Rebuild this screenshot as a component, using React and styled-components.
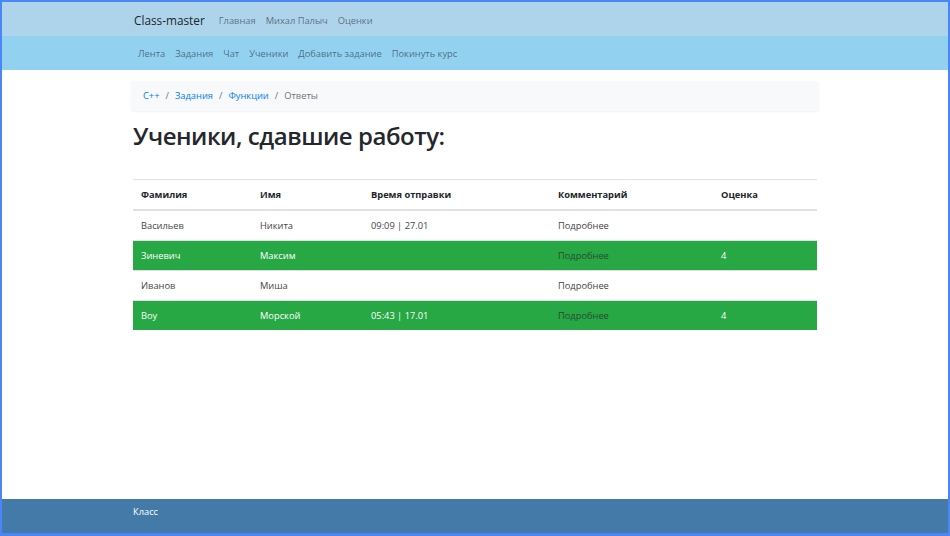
import React from "react";
import styled, { createGlobalStyle } from "styled-components";

const Global = createGlobalStyle`
  html, body { margin: 0; padding: 0; }
  body { font-family: "Open Sans", "Noto Sans", sans-serif; color: #212529; }
  * { box-sizing: border-box; }
`;

const Frame = styled.div`
  height: 536px;
  border: 2px solid #4a86f7;
  border-bottom-width: 3px;
  display: flex;
  flex-direction: column;
  background: #fff;
`;

const Bar = styled.div`
  background: ${(p) => p.$bg};
  height: 34px;
  display: flex;
  justify-content: center;
`;

const Container = styled.div`
  width: 684px;
  display: flex;
  align-items: ${(p) => (p.$top ? "flex-start" : "center")};
  padding-top: ${(p) => p.$pt || 0}px;
`;

const Brand = styled.span`
  font-size: 11.8px;
  color: #212529;
  margin-right: 9px;
  margin-left: 1px;
`;

const NavLink = styled.a`
  font-size: 9.3px;
  color: rgba(0, 0, 0, 0.5);
  padding: 0 5px;
  text-decoration: none;
  white-space: nowrap;
`;

const Main = styled.main`
  flex: 1;
  display: flex;
  justify-content: center;
  padding-top: 11px;
`;

const Content = styled.div`
  width: 684px;
  display: flex;
  flex-direction: column;
`;

const Breadcrumb = styled.nav`
  background: #f8f9fa;
  border-radius: 3px;
  box-shadow: 0 1px 2px rgba(0, 0, 0, 0.06);
  padding: 7px 12px;
  margin: 0 -2px;
  font-size: 9.3px;
  line-height: 16px;
  display: flex;
  gap: 6px;
`;

const Crumb = styled.span`
  color: ${(p) => (p.$active ? "#6c757d" : "#007bff")};
`;

const Sep = styled.span`
  color: #6c757d;
`;

const Title = styled.h1`
  font-size: 24px;
  font-weight: 600;
  margin: 10px 0 28px;
  line-height: 30px;
  color: #24282c;
  letter-spacing: -0.45px;
`;

const Table = styled.table`
  width: 100%;
  border-collapse: collapse;
  font-size: 9.3px;
`;

const Th = styled.th`
  text-align: left;
  font-weight: 700;
  padding: 7px 8px;
  line-height: 15px;
  border-top: 1px solid #dee2e6;
  border-bottom: 2px solid #dee2e6;
  color: #212529;
  width: ${(p) => p.$w}px;
`;

const Tr = styled.tr`
  background: ${(p) => (p.$ok ? "#28a745" : "transparent")};
  color: ${(p) => (p.$ok ? "#fff" : "#444")};
`;

const Td = styled.td`
  padding: 7px 8px;
  line-height: 15px;
  border-top: 1px solid #dee2e6;
`;

const More = styled.span`
  color: ${(p) => (p.$ok ? "#2b4a33" : "#444")};
`;

const Footer = styled.footer`
  background: #437aa7;
  height: 34px;
  display: flex;
  justify-content: center;
`;

const FootText = styled.span`
  color: #fff;
  font-size: 9.3px;
  line-height: 14px;
`;

const rows = [
  { last: "Васильев", first: "Никита", time: "09:09 | 27.01", grade: "", ok: false },
  { last: "Зиневич", first: "Максим", time: "", grade: "4", ok: true },
  { last: "Иванов", first: "Миша", time: "", grade: "", ok: false },
  { last: "Boy", first: "Морской", time: "05:43 | 17.01", grade: "4", ok: true },
];

export default function App() {
  return (
    <>
      <Global />
      <Frame>
        <Bar $bg="#aed4ec">
          <Container $pt={2}>
            <Brand>Class-master</Brand>
            <NavLink>Главная</NavLink>
            <NavLink>Михал Палыч</NavLink>
            <NavLink>Оценки</NavLink>
          </Container>
        </Bar>
        <Bar $bg="#93d1f1">
          <Container>
            <NavLink>Лента</NavLink>
            <NavLink>Задания</NavLink>
            <NavLink>Чат</NavLink>
            <NavLink>Ученики</NavLink>
            <NavLink>Добавить задание</NavLink>
            <NavLink>Покинуть курс</NavLink>
          </Container>
        </Bar>
        <Main>
          <Content>
            <Breadcrumb>
              <Crumb>C++</Crumb>
              <Sep>/</Sep>
              <Crumb>Задания</Crumb>
              <Sep>/</Sep>
              <Crumb>Функции</Crumb>
              <Sep>/</Sep>
              <Crumb $active>Ответы</Crumb>
            </Breadcrumb>
            <Title>Ученики, сдавшие работу:</Title>
            <Table>
              <thead>
                <tr>
                  <Th $w={119}>Фамилия</Th>
                  <Th $w={111}>Имя</Th>
                  <Th $w={187}>Время отправки</Th>
                  <Th $w={163}>Комментарий</Th>
                  <Th>Оценка</Th>
                </tr>
              </thead>
              <tbody>
                {rows.map((r) => (
                  <Tr key={r.last} $ok={r.ok}>
                    <Td>{r.last}</Td>
                    <Td>{r.first}</Td>
                    <Td>{r.time}</Td>
                    <Td>
                      <More $ok={r.ok}>Подробнее</More>
                    </Td>
                    <Td>{r.grade}</Td>
                  </Tr>
                ))}
              </tbody>
            </Table>
          </Content>
        </Main>
        <Footer>
          <Container $top $pt={6}>
            <FootText>Класс</FootText>
          </Container>
        </Footer>
      </Frame>
    </>
  );
}
